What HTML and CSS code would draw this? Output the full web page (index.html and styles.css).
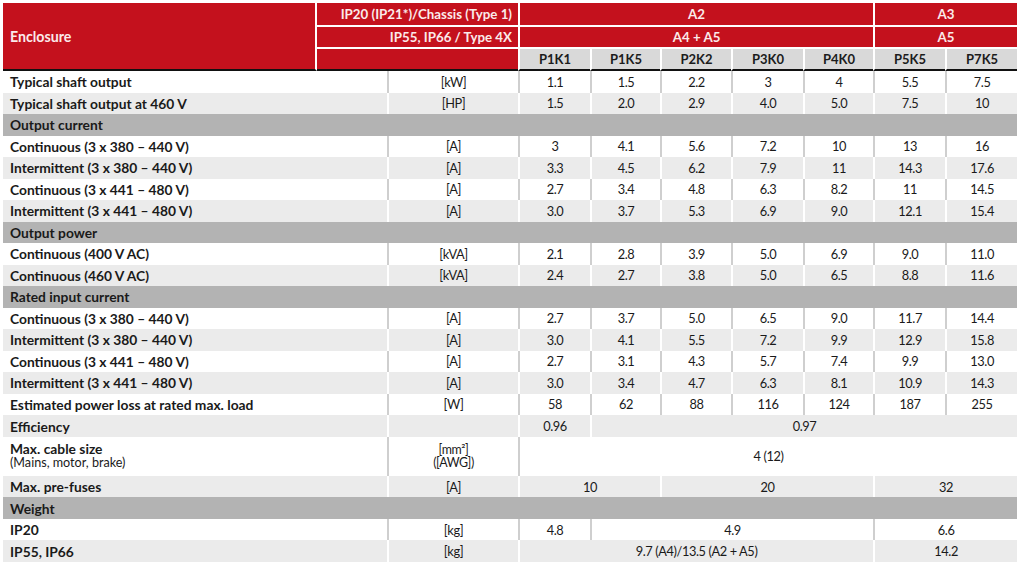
FILE: index.html
```html
<!DOCTYPE html>
<html lang="en">
<head>
<meta charset="utf-8">
<title>Enclosure specifications</title>
<link rel="stylesheet" href="styles.css">
</head>
<body>
<table class="spec">
  <colgroup>
    <col class="c-label"><col class="c-ip"><col class="c-unit">
    <col class="c-d72"><col class="c-d70"><col class="c-d71"><col class="c-d72"><col class="c-d70"><col class="c-d72"><col class="c-d72">
  </colgroup>
  <thead>
    <tr class="h1">
      <th class="enc" rowspan="3">Enclosure</th>
      <th class="ip" colspan="2">IP20 (IP21*)/Chassis (Type 1)</th>
      <th class="grp" colspan="5">A2</th>
      <th class="grp last" colspan="2">A3</th>
    </tr>
    <tr class="h2">
      <th class="ip" colspan="2">IP55, IP66 / Type 4X</th>
      <th class="grp" colspan="5">A4 + A5</th>
      <th class="grp last" colspan="2">A5</th>
    </tr>
    <tr class="h3">
      <th class="ipblank" colspan="2"></th>
      <th class="model">P1K1</th>
      <th class="model">P1K5</th>
      <th class="model">P2K2</th>
      <th class="model">P3K0</th>
      <th class="model">P4K0</th>
      <th class="model">P5K5</th>
      <th class="model">P7K5</th>
    </tr>
  </thead>
  <tbody>
    <tr class="w"><td class="lab" colspan="2">Typical shaft output</td><td>[kW]</td><td>1.1</td><td>1.5</td><td>2.2</td><td>3</td><td>4</td><td>5.5</td><td>7.5</td></tr>
    <tr class="g"><td class="lab" colspan="2">Typical shaft output at 460 V</td><td>[HP]</td><td>1.5</td><td>2.0</td><td>2.9</td><td>4.0</td><td>5.0</td><td>7.5</td><td>10</td></tr>
    <tr class="s"><td class="lab" colspan="10">Output current</td></tr>
    <tr class="w"><td class="lab" colspan="2">Continuous (3 x 380 – 440 V)</td><td>[A]</td><td>3</td><td>4.1</td><td>5.6</td><td>7.2</td><td>10</td><td>13</td><td>16</td></tr>
    <tr class="g"><td class="lab" colspan="2">Intermittent (3 x 380 – 440 V)</td><td>[A]</td><td>3.3</td><td>4.5</td><td>6.2</td><td>7.9</td><td>11</td><td>14.3</td><td>17.6</td></tr>
    <tr class="w"><td class="lab" colspan="2">Continuous (3 x 441 – 480 V)</td><td>[A]</td><td>2.7</td><td>3.4</td><td>4.8</td><td>6.3</td><td>8.2</td><td>11</td><td>14.5</td></tr>
    <tr class="g"><td class="lab" colspan="2">Intermittent (3 x 441 – 480 V)</td><td>[A]</td><td>3.0</td><td>3.7</td><td>5.3</td><td>6.9</td><td>9.0</td><td>12.1</td><td>15.4</td></tr>
    <tr class="s"><td class="lab" colspan="10">Output power</td></tr>
    <tr class="w"><td class="lab" colspan="2">Continuous (400 V AC)</td><td>[kVA]</td><td>2.1</td><td>2.8</td><td>3.9</td><td>5.0</td><td>6.9</td><td>9.0</td><td>11.0</td></tr>
    <tr class="g"><td class="lab" colspan="2">Continuous (460 V AC)</td><td>[kVA]</td><td>2.4</td><td>2.7</td><td>3.8</td><td>5.0</td><td>6.5</td><td>8.8</td><td>11.6</td></tr>
    <tr class="s"><td class="lab" colspan="10">Rated input current</td></tr>
    <tr class="w"><td class="lab" colspan="2">Continuous (3 x 380 – 440 V)</td><td>[A]</td><td>2.7</td><td>3.7</td><td>5.0</td><td>6.5</td><td>9.0</td><td>11.7</td><td>14.4</td></tr>
    <tr class="g"><td class="lab" colspan="2">Intermittent (3 x 380 – 440 V)</td><td>[A]</td><td>3.0</td><td>4.1</td><td>5.5</td><td>7.2</td><td>9.9</td><td>12.9</td><td>15.8</td></tr>
    <tr class="w"><td class="lab" colspan="2">Continuous (3 x 441 – 480 V)</td><td>[A]</td><td>2.7</td><td>3.1</td><td>4.3</td><td>5.7</td><td>7.4</td><td>9.9</td><td>13.0</td></tr>
    <tr class="g"><td class="lab" colspan="2">Intermittent (3 x 441 – 480 V)</td><td>[A]</td><td>3.0</td><td>3.4</td><td>4.7</td><td>6.3</td><td>8.1</td><td>10.9</td><td>14.3</td></tr>
    <tr class="w"><td class="lab" colspan="2">Estimated power loss at rated max. load</td><td>[W]</td><td>58</td><td>62</td><td>88</td><td>116</td><td>124</td><td>187</td><td>255</td></tr>
    <tr class="g"><td class="lab" colspan="2">Efficiency</td><td></td><td>0.96</td><td colspan="6">0.97</td></tr>
    <tr class="w tall"><td class="lab" colspan="2">Max. cable size<span class="sub">(Mains, motor, brake)</span></td><td class="unit2">[mm²]<br>([AWG])</td><td colspan="7">4 (12)</td></tr>
    <tr class="g"><td class="lab" colspan="2">Max. pre-fuses</td><td>[A]</td><td colspan="2">10</td><td colspan="3">20</td><td colspan="2">32</td></tr>
    <tr class="s"><td class="lab" colspan="10">Weight</td></tr>
    <tr class="w"><td class="lab" colspan="2">IP20</td><td>[kg]</td><td>4.8</td><td colspan="4">4.9</td><td colspan="2">6.6</td></tr>
    <tr class="g"><td class="lab" colspan="2">IP55, IP66</td><td>[kg]</td><td colspan="5">9.7 (A4)/13.5 (A2 + A5)</td><td colspan="2">14.2</td></tr>
  </tbody>
</table>
</body>
</html>
```

FILE: styles.css
```css
html, body {
  margin: 0;
  padding: 0;
  background: #ffffff;
}

body {
  padding: 3px 0 0 3px;
  font-family: Lato, "Open Sans", "Liberation Sans", sans-serif;
  color: #1a1a1a;
}

.spec {
  table-layout: fixed;
  width: 1014px;
  border-collapse: separate;
  border-spacing: 0;
  font-size: 12.8px;
  letter-spacing: -0.4px;
}

.c-label { width: 314px; }
.c-ip { width: 70px; }
.c-unit { width: 131px; }
.c-d72 { width: 72px; }
.c-d70 { width: 70px; }
.c-d71 { width: 71px; }

/* ---------- header ---------- */
.spec th {
  padding: 0;
  font-weight: 700;
  font-size: 13.3px;
  letter-spacing: 0;
  color: #fbeaea;
  background: #c4111d;
  text-align: center;
  vertical-align: middle;
}

.h1 { height: 23.5px; }
.h2 { height: 22.5px; }
.h3 { height: 22px; }

.h1 th, .h2 th {
  border-bottom: 2px solid #ffffff;
}

.spec th.enc {
  text-align: left;
  padding-left: 7px;
  font-size: 14.2px;
  border-right: 2px solid #ffffff;
  border-bottom: 2px solid #111111;
}

.spec th.ip {
  text-align: right;
  padding-right: 6px;
}

.grp {
  border-left: 2px solid #ffffff;
}

.ipblank {
  border-bottom: 2px solid #111111;
}

.spec th.model {
  background: #d9d9d9;
  color: #1c1c1c;
  font-size: 13px;
  border-left: 2px solid #ffffff;
  border-bottom: 2px solid #111111;
}

/* ---------- body ---------- */
.spec td {
  padding: 0;
  text-align: center;
  vertical-align: middle;
  white-space: nowrap;
}

.spec tbody tr { height: 21.53px; }
.spec tbody tr.tall { height: 39px; }

.w td { background: #ffffff; }
.g td { background: #ebebeb; }
.s td { background: #b3b3b3; }

.w td + td { border-left: 2px solid #cfcfcf; }
.g td + td { border-left: 2px solid #ffffff; }

.spec td.lab {
  text-align: left;
  padding-left: 7px;
  font-weight: 700;
  font-size: 13.8px;
  letter-spacing: 0;
}

.sub {
  display: block;
  font-weight: 400;
  font-size: 12.6px;
  line-height: 14px;
}

.tall td.lab { line-height: 14px; }

.spec td.unit2 {
  line-height: 13.5px;
  font-size: 12.4px;
}
```
